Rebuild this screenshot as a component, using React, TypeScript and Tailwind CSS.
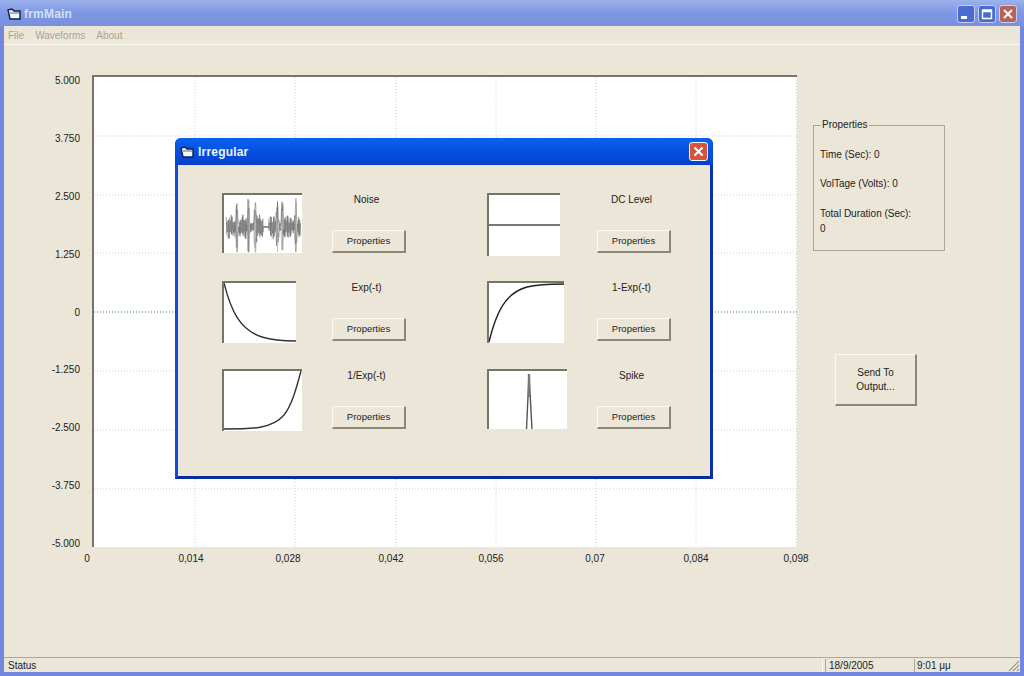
import React from 'react'

const yLabels = ['5.000', '3.750', '2.500', '1.250', '0', '-1.250', '-2.500', '-3.750', '-5.000']

const xLabels = [
  { text: '0', cls: 'w-[104px]' },
  { text: '0,014', cls: 'w-[104px]' },
  { text: '0,028', cls: 'w-[90px]' },
  { text: '0,042', cls: 'w-[116px]' },
  { text: '0,056', cls: 'w-[84px]' },
  { text: '0,07', cls: 'w-[124px]' },
  { text: '0,084', cls: 'w-[78px]' },
  { text: '0,098', cls: 'w-[122px]' },
]

const gridX = [101, 201, 302, 402, 502, 602]
const gridY = [59, 118, 176, 294, 353, 412]

function FolderIcon() {
  return (
    <svg width="14" height="14" viewBox="0 0 14 14" className="shrink-0">
      <path d="M1 3 L5 2 L7 4 L13 4 L13 12 L3 12 Z" fill="#f4f6fb" stroke="#10204a" strokeWidth="1.4" />
      <path d="M3 6 L12 6" stroke="#5a6c9c" strokeWidth="1" />
    </svg>
  )
}

function TitleButton({ kind }: { kind: 'min' | 'max' | 'close' }) {
  const bg = kind === 'close' ? 'bg-[#b8625c]' : 'bg-[#4a6cd0]'
  return (
    <div className={`w-[18px] h-[18px] rounded-[3px] border border-[#c3cff0] ${bg} flex items-center justify-center`}>
      <svg width="14" height="14" viewBox="0 0 14 14">
        {kind === 'min' && <rect x="2" y="9" width="6" height="3" fill="#fff" />}
        {kind === 'max' && (
          <path d="M2.5 3 H11.5 V11.5 H2.5 Z M2.5 4.5 H11.5" fill="none" stroke="#fff" strokeWidth="1.4" />
        )}
        {kind === 'close' && <path d="M3 3 L11 11 M11 3 L3 11" stroke="#fff" strokeWidth="2" />}
      </svg>
    </div>
  )
}

function PropsButton() {
  return (
    <button className="w-[74px] h-[23px] bg-[#ebe6d8] text-[9.5px] border-t border-l border-t-[#faf8f0] border-l-[#faf8f0] border-r-2 border-b-2 border-r-[#8a8776] border-b-[#8a8776] text-center">
      Properties
    </button>
  )
}

function noisePoints(phase: number) {
  const spikes = [13, 25, 32, 55, 60, 74]
  const pts: string[] = []
  for (let x = 2; x <= 79; x += 0.5) {
    let env = 3 + 6 * Math.abs(Math.sin(x * 0.21 + 0.4))
    if (x > 40 && x < 46) env = 0.8
    let s = 0
    for (const p of spikes) s += Math.exp(-((x - p) * (x - p)) / 1.2) * 24
    const v = Math.sin(x * 3.1 + phase) * env + Math.sin(x * 7.3 + phase * 2) * env * 0.5
    const y = 33 + v + (Math.sin(x * 11 + phase) > 0 ? s : -s)
    pts.push(`${x},${Math.max(1, Math.min(59, y)).toFixed(1)}`)
  }
  return pts.join(' ')
}

function Thumb({ cls, children }: { cls: string; children: React.ReactNode }) {
  return (
    <div className={`${cls} bg-white border-t-2 border-l-2 border-t-[#77756a] border-l-[#77756a] overflow-hidden`}>
      {children}
    </div>
  )
}

const waves = [
  {
    label: 'Noise',
    thumb: (
      <Thumb cls="w-[80px] h-[60px]">
        <svg width="78" height="58" viewBox="0 0 80 60">
          <polyline points={noisePoints(0.5)} fill="none" stroke="#b5b5b5" strokeWidth="0.7" />
          <polyline points={noisePoints(2.1)} fill="none" stroke="#888" strokeWidth="0.6" />
          <polyline points={noisePoints(4.4)} fill="none" stroke="#555" strokeWidth="0.5" />
        </svg>
      </Thumb>
    ),
  },
  {
    label: 'DC Level',
    thumb: (
      <Thumb cls="w-[73px] h-[63px]">
        <svg width="71" height="61" viewBox="0 0 71 61">
          <path d="M0 30 H71" stroke="#4a4a44" strokeWidth="1.6" />
        </svg>
      </Thumb>
    ),
  },
  {
    label: 'Exp(-t)',
    thumb: (
      <Thumb cls="w-[74px] h-[62px]">
        <svg width="72" height="60" viewBox="0 0 72 60">
          <path d="M0 0 C 7 28, 16 47, 38 54 C 46 56.5, 60 58, 72 58" fill="none" stroke="#333" strokeWidth="1.4" />
        </svg>
      </Thumb>
    ),
  },
  {
    label: '1-Exp(-t)',
    thumb: (
      <Thumb cls="w-[77px] h-[62px]">
        <svg width="75" height="60" viewBox="0 0 75 60">
          <path d="M0 59 C 7 30, 16 10, 38 4 C 46 2, 60 1, 75 1" fill="none" stroke="#222" strokeWidth="1.4" />
        </svg>
      </Thumb>
    ),
  },
  {
    label: '1/Exp(-t)',
    thumb: (
      <Thumb cls="w-[80px] h-[62px]">
        <svg width="78" height="60" viewBox="0 0 78 60">
          <path d="M0 58 C 28 58, 48 58, 60 44 C 68 34, 73 15, 77 0" fill="none" stroke="#333" strokeWidth="1.4" />
        </svg>
      </Thumb>
    ),
  },
  {
    label: 'Spike',
    thumb: (
      <Thumb cls="w-[80px] h-[60px]">
        <svg width="78" height="58" viewBox="0 0 78 58">
          <path d="M37.5 58 L40 3 L43 58" fill="none" stroke="#555" strokeWidth="1.4" />
          <path d="M40 3 V26" stroke="#777" strokeWidth="2.4" />
        </svg>
      </Thumb>
    ),
  },
]

export default function App() {
  return (
    <div className="relative w-[1024px] h-[676px] overflow-hidden bg-[#ebe6d8] text-[#222] text-[10px] leading-[14px] font-['Liberation_Sans',sans-serif]">
      <div className="flex flex-col h-full border-l-4 border-r-4 border-b-4 border-[#7487dc]">
        {/* title bar */}
        <div className="-mx-1 h-[26px] shrink-0 flex items-center pl-[7px] pr-[7px] pt-[1px] bg-gradient-to-b from-[#9db2ec] via-[#7d97e3] to-[#7a90dd]">
          <FolderIcon />
          <span className="ml-[3px] text-[12px] font-bold tracking-[0.2px] text-[#d3e0f8]">frmMain</span>
          <div className="ml-auto flex gap-[3px]">
            <TitleButton kind="min" />
            <TitleButton kind="max" />
            <TitleButton kind="close" />
          </div>
        </div>

        {/* menu */}
        <div className="h-[19px] shrink-0 flex items-center pl-[4px] pt-[1px] gap-[11px] text-[#a8a595] border-b border-b-[#faf8f0]">
          <span>File</span>
          <span>Waveforms</span>
          <span>About</span>
        </div>

        {/* client area */}
        <div className="flex-1 flex">
          <div className="w-[76px] shrink-0 h-[477px] mt-[29px] flex flex-col justify-between items-end">
            {yLabels.map((l) => (
              <span key={l}>{l}</span>
            ))}
          </div>

          <div className="ml-[12px] mt-[30px] w-[705px] shrink-0">
            <div className="w-[705px] h-[472px] bg-white border-t-2 border-l-2 border-t-[#77756a] border-l-[#77756a]">
              <svg width="703" height="470" viewBox="0 0 703 470">
                {gridX.map((x) => (
                  <line key={x} x1={x} y1="0" x2={x} y2="470" stroke="#d0d0d0" strokeWidth="1" strokeDasharray="1 2" />
                ))}
                <line x1="702.5" y1="0" x2="702.5" y2="470" stroke="#d0d0d0" strokeDasharray="1 2" />
                {gridY.map((y) => (
                  <line key={y} x1="0" y1={y} x2="703" y2={y} stroke="#d0d0d0" strokeWidth="1" strokeDasharray="1 2" />
                ))}
                <line x1="0" y1="235" x2="703" y2="235" stroke="#2f7f86" strokeWidth="1" strokeDasharray="1 2" />
              </svg>
            </div>
            <div className="flex -ml-[57px] mt-[5px]">
              {xLabels.map((l) => (
                <span key={l.text} className={`${l.cls} shrink-0 text-center`}>
                  {l.text}
                </span>
              ))}
            </div>
          </div>

          <div className="ml-[16px] flex flex-col items-start">
            <fieldset className="mt-[73px] w-[132px] h-[133px] border border-[#a9a693] pl-[6px]">
              <legend className="ml-[1px] px-[1px]">Properties</legend>
              <p className="mt-[16px]">Time (Sec): 0</p>
              <p className="mt-[15px]">VolTage (Volts): 0</p>
              <p className="mt-[16px]">Total Duration (Sec):</p>
              <p className="mt-[1px]">0</p>
            </fieldset>
            <button className="ml-[22px] mt-[103px] w-[82px] h-[52px] bg-[#ebe6d8] border-t border-l border-t-[#faf8f0] border-l-[#faf8f0] border-r-2 border-b-2 border-r-[#8a8776] border-b-[#8a8776] text-center">
              Send To
              <br />
              Output...
            </button>
          </div>
        </div>

        {/* status bar */}
        <div className="h-[15px] shrink-0 flex items-stretch border-t border-t-[#aca899] pt-[1px]">
          <span className="w-[819px] shrink-0 pl-[4px] border-r border-r-[#faf8f0]">Status</span>
          <span className="w-[87px] shrink-0 ml-[2px] pl-[3px] border-l border-l-[#aca899]">18/9/2005</span>
          <span className="w-[86px] shrink-0 ml-[2px] pl-[2px] border-l border-l-[#aca899]">9:01 μμ</span>
          <svg width="14" height="14" viewBox="0 0 14 14" className="ml-auto self-end">
            <path d="M13 3 L3 13 M13 7 L7 13 M13 11 L11 13" stroke="#9c9a88" strokeWidth="1.2" />
          </svg>
        </div>
      </div>

      {/* Irregular dialog */}
      <div className="absolute left-[175px] top-[138px] w-[538px] h-[341px] flex flex-col bg-[#ebe6d8] rounded-t-[6px] border-l-[3px] border-r-[3px] border-b-[3px] border-l-[#0d4fd8] border-r-[#0a2fa8] border-b-[#0a2a9f]">
        <div className="-mx-[3px] h-[27px] shrink-0 rounded-t-[6px] flex items-center pl-[5px] pr-[5px] bg-gradient-to-b from-[#0a63ee] via-[#0550e0] to-[#0440cc]">
          <FolderIcon />
          <span className="ml-[4px] text-[12px] font-bold tracking-[0.2px] text-[#eef3ff]">Irregular</span>
          <div className="ml-auto w-[19px] h-[19px] rounded-[3px] border border-[#f2f4fa] bg-[#d5543a] flex items-center justify-center">
            <svg width="13" height="13" viewBox="0 0 13 13">
              <path d="M2.5 2.5 L10.5 10.5 M10.5 2.5 L2.5 10.5" stroke="#fff" strokeWidth="2" />
            </svg>
          </div>
        </div>
        <div className="grid grid-cols-[265px_265px] pl-[44px] pt-[28px]">
          {waves.map((w) => (
            <div key={w.label} className="h-[88px] flex items-start">
              <div className="w-[110px] shrink-0">{w.thumb}</div>
              <div className="w-[74px] flex flex-col items-center">
                <span className="pr-[5px]">{w.label}</span>
                <div className="mt-[23px]">
                  <PropsButton />
                </div>
              </div>
            </div>
          ))}
        </div>
      </div>
    </div>
  )
}
